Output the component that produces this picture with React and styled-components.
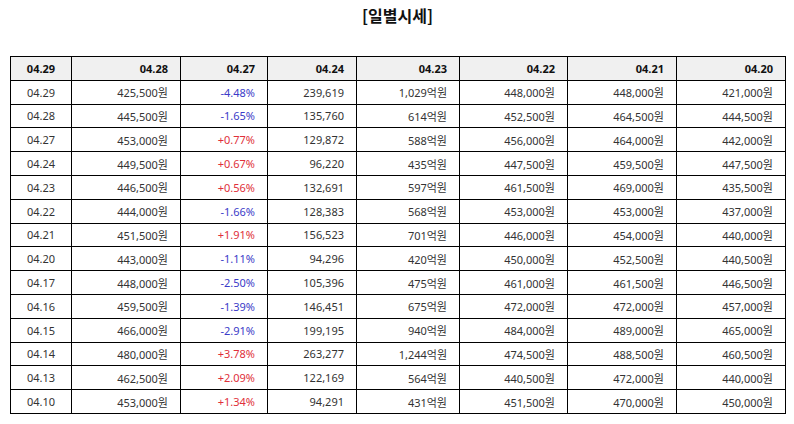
import React from 'react';
import styled, { createGlobalStyle } from 'styled-components';

const GlobalStyle = createGlobalStyle`
  body {
    margin: 0;
    background: #fff;
    font-family: 'Noto Sans', 'Noto Sans CJK KR', sans-serif;
  }
`;

const Wrapper = styled.div`
  width: 794px;
  padding: 0 9px 0 10px;
  box-sizing: border-box;
`;

const Title = styled.h3`
  margin: 0;
  padding-top: 4px;
  height: 56px;
  box-sizing: border-box;
  text-align: center;
  font-family: 'Noto Sans CJK KR', sans-serif;
  font-size: 16px;
  font-weight: 700;
  line-height: 22px;
  color: #111;
`;

const Table = styled.table`
  width: 775px;
  border-collapse: collapse;
  table-layout: fixed;
  font-size: 11px;
  color: #333;
`;

const Row = styled.tr`
  height: 23.8px;
`;

const HeadCell = styled.th`
  border: 1px solid #000;
  background: #f0f0f0;
  padding: 0 12px 0 0;
  font-weight: 700;
  color: #111;
  text-align: ${p => (p.$center ? 'center' : 'right')};
  ${p => p.$center && 'padding: 0;'}
`;

const Cell = styled.td`
  border: 1px solid #000;
  padding: 0 12px 0 0;
  text-align: ${p => (p.$center ? 'center' : 'right')};
  ${p => p.$center && 'padding: 0;'}
  color: ${p => (p.$tone === 'up' ? '#e0303a' : p.$tone === 'down' ? '#3b3bc8' : '#333')};
`;

const widths = [61, 109, 87, 89, 103, 108, 109, 109];
const heads = ['04.29', '04.28', '04.27', '04.24', '04.23', '04.22', '04.21', '04.20'];

const rows = [
  ['04.29', '425,500원', '-4.48%', '239,619', '1,029억원', '448,000원', '448,000원', '421,000원'],
  ['04.28', '445,500원', '-1.65%', '135,760', '614억원', '452,500원', '464,500원', '444,500원'],
  ['04.27', '453,000원', '+0.77%', '129,872', '588억원', '456,000원', '464,000원', '442,000원'],
  ['04.24', '449,500원', '+0.67%', '96,220', '435억원', '447,500원', '459,500원', '447,500원'],
  ['04.23', '446,500원', '+0.56%', '132,691', '597억원', '461,500원', '469,000원', '435,500원'],
  ['04.22', '444,000원', '-1.66%', '128,383', '568억원', '453,000원', '453,000원', '437,000원'],
  ['04.21', '451,500원', '+1.91%', '156,523', '701억원', '446,000원', '454,000원', '440,000원'],
  ['04.20', '443,000원', '-1.11%', '94,296', '420억원', '450,000원', '452,500원', '440,500원'],
  ['04.17', '448,000원', '-2.50%', '105,396', '475억원', '461,000원', '461,500원', '446,500원'],
  ['04.16', '459,500원', '-1.39%', '146,451', '675억원', '472,000원', '472,000원', '457,000원'],
  ['04.15', '466,000원', '-2.91%', '199,195', '940억원', '484,000원', '489,000원', '465,000원'],
  ['04.14', '480,000원', '+3.78%', '263,277', '1,244억원', '474,500원', '488,500원', '460,500원'],
  ['04.13', '462,500원', '+2.09%', '122,169', '564억원', '440,500원', '472,000원', '440,000원'],
  ['04.10', '453,000원', '+1.34%', '94,291', '431억원', '451,500원', '470,000원', '450,000원'],
];

const toneOf = v => (v.startsWith('+') ? 'up' : v.startsWith('-') ? 'down' : undefined);

export default function App() {
  return (
    <Wrapper>
      <GlobalStyle />
      <Title>[일별시세]</Title>
      <Table>
        <colgroup>
          {widths.map((w, i) => <col key={i} style={{ width: w }} />)}
        </colgroup>
        <thead>
          <Row>
            {heads.map((h, i) => <HeadCell key={h} $center={i === 0}>{h}</HeadCell>)}
          </Row>
        </thead>
        <tbody>
          {rows.map(r => (
            <Row key={r[0]}>
              {r.map((v, i) => (
                <Cell key={i} $center={i === 0} $tone={i === 2 ? toneOf(v) : undefined}>{v}</Cell>
              ))}
            </Row>
          ))}
        </tbody>
      </Table>
    </Wrapper>
  );
}
